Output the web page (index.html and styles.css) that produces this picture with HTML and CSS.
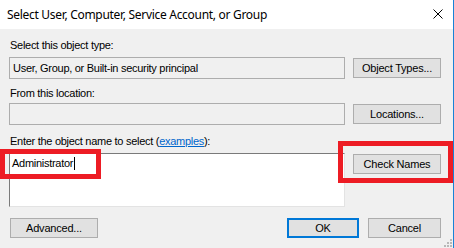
FILE: index.html
```html
<!DOCTYPE html>
<html lang="en">
  <head>
    <meta charset="UTF-8" />
    <title>Select User, Computer, Service Account, or Group</title>
    <link rel="stylesheet" href="styles.css">
  </head>
  <body>
    <div class="window">
      <div class="titlebar">
        <span class="title">Select User, Computer, Service Account, or Group</span>
        <svg class="close" width="10" height="10" viewBox="0 0 10 10">
          <path d="M0.5 0.5 L9.5 9.5 M9.5 0.5 L0.5 9.5" stroke="#000" stroke-width="1" />
        </svg>
      </div>
      <div class="dialog-body">
        <div class="label label-first">Select this object type:</div>
        <div class="field field-first">User, Group, or Built-in security principal</div>
        <button class="btn btn-side">Object Types...</button>

        <div class="label label-second">From this location:</div>
        <div class="field field-second"></div>
        <button class="btn btn-side">Locations...</button>

        <div class="label label-third">Enter the object name to select (<a href="#">examples</a>):</div>
        <div class="names-box"><span class="names-text">Administrator</span><span class="caret"></span></div>
        <button class="btn btn-side btn-top">Check Names</button>

        <div class="footer">
          <button class="btn btn-advanced">Advanced...</button>
          <button class="btn btn-ok">OK</button>
          <button class="btn btn-cancel">Cancel</button>
        </div>
      </div>

      <!-- annotation boxes drawn over the dialog -->
      <div class="mark mark-name"></div>
      <div class="mark mark-check"></div>

      <svg class="grip" width="10" height="10" viewBox="0 0 10 10">
        <rect x="7" y="1" width="2" height="2" fill="#b8b8b8" />
        <rect x="4" y="4" width="2" height="2" fill="#b8b8b8" />
        <rect x="7" y="4" width="2" height="2" fill="#b8b8b8" />
        <rect x="1" y="7" width="2" height="2" fill="#b8b8b8" />
        <rect x="4" y="7" width="2" height="2" fill="#b8b8b8" />
        <rect x="7" y="7" width="2" height="2" fill="#b8b8b8" />
      </svg>
    </div>
  </body>
</html>
```

FILE: styles.css
```css
html, body {
  margin: 0;
  padding: 0;
}

body {
  font-family: "Liberation Sans", Arial, sans-serif;
  font-size: 11px;
  letter-spacing: -0.28px;
  color: #000;
  background: #f0f0f0;
}

.window {
  position: relative;
  width: 453px;
  height: 248px;
  background: #f0f0f0;
  border-right: 1px solid #1883d7;
  overflow: hidden;
}

.titlebar {
  height: 29px;
  background: #fff;
  display: flex;
  align-items: center;
  justify-content: space-between;
  padding: 0 10px 0 7px;
}

.title {
  font-family: "Noto Sans", sans-serif;
  font-size: 12px;
  letter-spacing: -0.3px;
  margin-top: -1px;
}

.close {
  display: block;
  margin-top: -2px;
}

.dialog-body {
  display: grid;
  grid-template-columns: 336px 88px;
  column-gap: 8px;
  padding-left: 9px;
}

.label {
  grid-column: 1 / -1;
  height: 13px;
  line-height: 13px;
  padding-left: 1px;
}

.label-first {
  margin-top: 10px;
}

.label-second {
  margin-top: 8px;
}

.label-third {
  margin-top: 10px;
}

.label a {
  color: #0066cc;
}

.field {
  box-sizing: border-box;
  height: 22px;
  line-height: 20px;
  padding-left: 3px;
  border: 1px solid #adadad;
  background: #f0f0f0;
  margin-top: 5px;
}

.field-second {
  margin-top: 3px;
}

.btn {
  box-sizing: border-box;
  height: 20px;
  padding: 0;
  border: 1px solid #adadad;
  background: #e1e1e1;
  font-family: "Liberation Sans", Arial, sans-serif;
  font-size: 11px;
  letter-spacing: -0.2px;
  color: #000;
}

.btn-side {
  align-self: end;
  margin-bottom: 1px;
}

.btn-top {
  align-self: start;
  margin-top: 6px;
}

.names-box {
  box-sizing: border-box;
  height: 54px;
  margin-top: 5px;
  background: #fff;
  border-top: 1px solid #7a7a7a;
  border-left: 1px solid #7a7a7a;
  border-right: 1px solid #e3e3e3;
  border-bottom: 1px solid #e3e3e3;
  padding: 2px 0 0 2px;
  line-height: 14px;
}

.caret {
  display: inline-block;
  width: 1px;
  height: 13px;
  margin-left: 1px;
  background: #000;
  vertical-align: -3px;
}

.footer {
  grid-column: 1 / -1;
  display: flex;
  gap: 9px;
  margin-top: 11px;
}

.btn-advanced {
  width: 88px;
  margin-left: 1px;
}

.btn-ok {
  width: 72px;
  margin-left: auto;
  border: 2px solid #0078d7;
}

.btn-cancel {
  width: 73px;
}

.mark {
  position: absolute;
  border: 5px solid #ed1c24;
  box-sizing: border-box;
}

.mark-name {
  left: 0;
  top: 149px;
  width: 101px;
  height: 30px;
}

.mark-check {
  left: 338px;
  top: 141px;
  width: 115px;
  height: 42px;
}

.grip {
  position: absolute;
  right: 0;
  bottom: 0;
}
```
